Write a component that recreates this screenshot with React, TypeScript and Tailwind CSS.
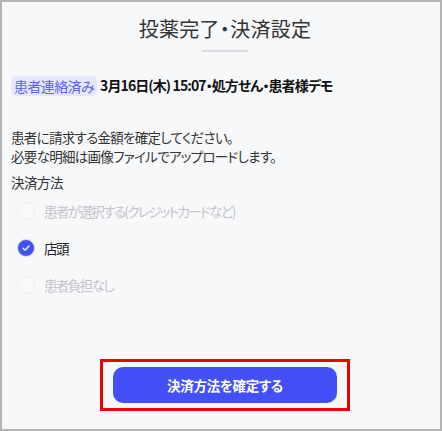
import { useState } from 'react';

const options = [
  { id: 'select', label: '患者が選択する(クレジットカードなど)', disabled: true },
  { id: 'store', label: '店頭', disabled: false },
  { id: 'none', label: '患者負担なし', disabled: true },
];

export default function App() {
  const [method, setMethod] = useState('store');

  return (
    <div
      className="w-[442px] h-[431px] border-2 border-[#b4b4b4] bg-[#f7f8fa] flex flex-col pl-[9px] pr-[1px] text-[#222] [font-feature-settings:'palt']"
      style={{ fontFamily: '"Noto Sans CJK JP", "Noto Sans", sans-serif' }}
    >
      {/* Header */}
      <div className="flex flex-col items-center pt-[13px]">
        <h1 className="text-[20px] leading-[28px] text-[#333] tracking-[0.3px]">投薬完了・決済設定</h1>
        <div className="mt-[7px] w-[46px] h-[2px] bg-[#dcdde0]" />
      </div>

      {/* Appointment info */}
      <div className="flex items-center gap-[3px] mt-[23px]">
        <span className="px-[3px] h-[20px] leading-[20px] rounded-[5px] bg-[#e6e7fd] text-[#5a62ef] text-[14px] tracking-[-0.6px]">
          患者連絡済み
        </span>
        <span className="text-[14px] font-bold text-[#111] tracking-[-0.9px]">3月16日(木) 15:07・処方せん・患者様デモ</span>
      </div>

      {/* Description */}
      <div className="mt-[32px] text-[13.5px] leading-[19px] text-[#333] tracking-[-0.7px]">
        <p>患者に請求する金額を確定してください。</p>
        <p>必要な明細は画像ファイルでアップロードします。</p>
      </div>

      <div className="mt-[6px] text-[13.5px] leading-[20px] text-[#333] tracking-[-0.5px]">決済方法</div>

      {/* Radios */}
      <div className="flex flex-col mt-[10px] gap-[19px]">
        {options.map((o) => {
          const checked = method === o.id;
          return (
            <button
              key={o.id}
              disabled={o.disabled}
              onClick={() => setMethod(o.id)}
              className="flex items-center gap-[9px] h-[18px] leading-[18px] pl-[6px] text-left"
            >
              {checked ? (
                <span className="w-[18px] h-[18px] rounded-full bg-[#4450ee] border border-[#d9dcf6] flex items-center justify-center">
                  <svg width="10" height="10" viewBox="0 0 10 10" fill="none">
                    <path d="M2 5.2 L4.2 7.2 L8 3" stroke="#fff" strokeWidth="1.2" strokeLinecap="round" strokeLinejoin="round" />
                  </svg>
                </span>
              ) : (
                <span className="w-[18px] h-[18px] rounded-full bg-[#f9fafb] border border-[#efeff2]" />
              )}
              <span className={`text-[13.5px] tracking-[-1.6px] ${o.disabled ? 'text-[#c3c4c8]' : 'text-[#222]'}`}>
                {o.label}
              </span>
            </button>
          );
        })}
      </div>

      {/* Confirm button */}
      <div className="mt-auto mb-[18px] flex justify-center">
        <div className="border-[3px] border-[#ee0000] px-[10px] py-[5px]">
          <button className="block w-[224px] h-[36px] rounded-[10px] bg-[#4450f7] text-white text-[13.5px] font-bold tracking-[-0.3px]">
            決済方法を確定する
          </button>
        </div>
      </div>
    </div>
  );
}
